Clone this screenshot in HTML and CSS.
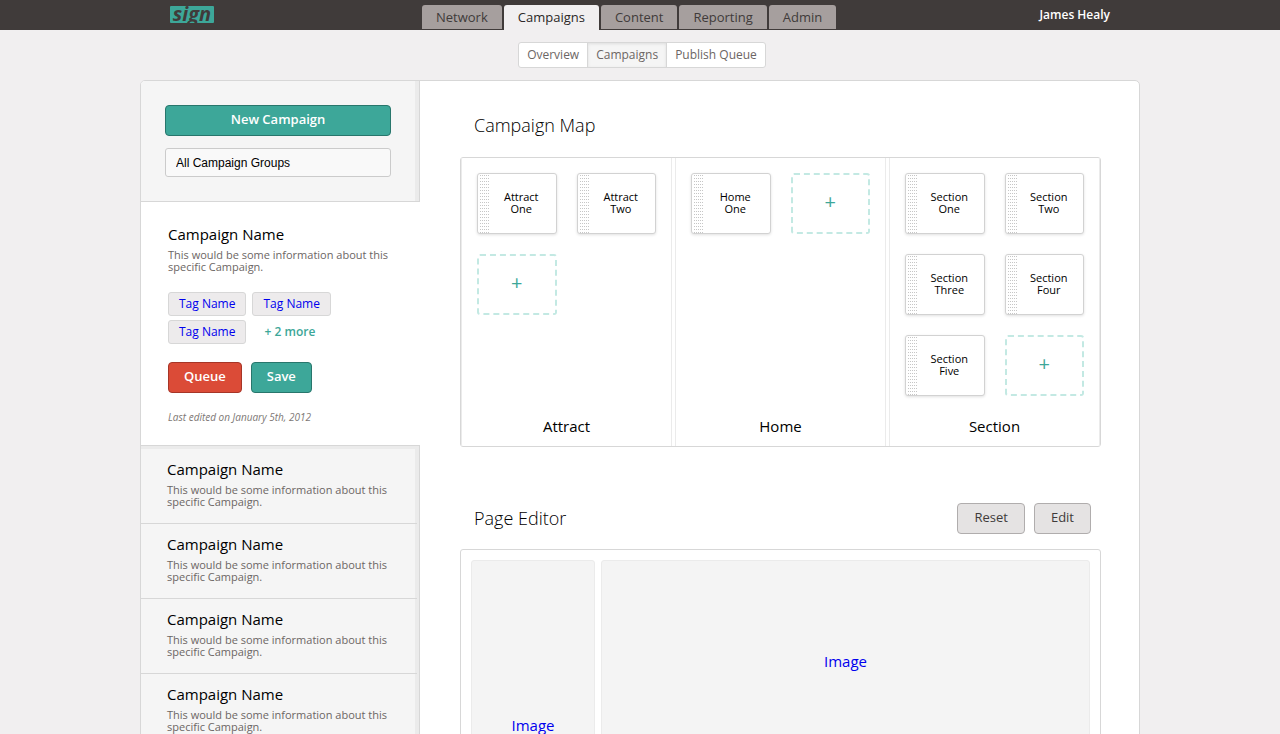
FILE: index.html
```html
<!DOCTYPE html>
<html lang="en">
<head>
<meta charset="utf-8">
<title>Sign – Campaigns</title>
<meta name="viewport" content="width=device-width, initial-scale=1">
<link rel="stylesheet" href="styles.css">
</head>
<body>
<header class="topbar">
  <div class="topbar-inner">
    <div class="brand"><a class="logo" href="#">sign</a></div>
    <nav class="tabs" aria-label="Main">
      <a class="tab" href="#">Network</a>
      <a class="tab tab-active" href="#">Campaigns</a>
      <a class="tab" href="#">Content</a>
      <a class="tab" href="#">Reporting</a>
      <a class="tab" href="#">Admin</a>
    </nav>
    <a class="user" href="#">James Healy</a>
  </div>
</header>
<nav class="subnav" aria-label="Campaigns">
  <div class="subnav-group">
    <a class="subnav-link" href="#">Overview</a>
    <a class="subnav-link subnav-active" href="#">Campaigns</a>
    <a class="subnav-link" href="#">Publish Queue</a>
  </div>
</nav>
<div class="page">
  <aside class="sidebar">
    <div class="side-tools">
      <button class="btn btn-teal" type="button">New Campaign</button>
      <select class="group-select" aria-label="Campaign group"><option>All Campaign Groups</option></select>
    </div>
    <section class="current">
      <h3 class="item-title">Campaign Name</h3>
      <p class="item-text">This would be some information about this specific Campaign.</p>
      <div class="tags">
        <a class="tag" href="#">Tag Name</a>
        <a class="tag" href="#">Tag Name</a>
        <a class="tag" href="#">Tag Name</a>
        <a class="more" href="#">+ 2 more</a>
      </div>
      <div class="actions">
        <button class="btn btn-red" type="button">Queue</button>
        <button class="btn btn-teal" type="button">Save</button>
      </div>
      <p class="edited">Last edited on January 5th, 2012</p>
    </section>
    <ul class="list">
      <li class="item"><h3 class="item-title">Campaign Name</h3><p class="item-text">This would be some information about this specific Campaign.</p></li>
      <li class="item"><h3 class="item-title">Campaign Name</h3><p class="item-text">This would be some information about this specific Campaign.</p></li>
      <li class="item"><h3 class="item-title">Campaign Name</h3><p class="item-text">This would be some information about this specific Campaign.</p></li>
      <li class="item"><h3 class="item-title">Campaign Name</h3><p class="item-text">This would be some information about this specific Campaign.</p></li>
    </ul>
  </aside>
  <main class="main">
    <div class="section-head"><h2 class="section-title">Campaign Map</h2></div>
    <div class="map">
      <section class="lane">
        <div class="cards">
          <div class="card"><span class="grip"></span><span class="card-name">Attract One</span></div>
          <div class="card"><span class="grip"></span><span class="card-name">Attract Two</span></div>
          <button class="add" type="button" aria-label="Add attract page">+</button>
        </div>
        <h4 class="lane-name">Attract</h4>
      </section>
      <section class="lane">
        <div class="cards">
          <div class="card"><span class="grip"></span><span class="card-name">Home One</span></div>
          <button class="add" type="button" aria-label="Add home page">+</button>
        </div>
        <h4 class="lane-name">Home</h4>
      </section>
      <section class="lane">
        <div class="cards">
          <div class="card"><span class="grip"></span><span class="card-name">Section One</span></div>
          <div class="card"><span class="grip"></span><span class="card-name">Section Two</span></div>
          <div class="card"><span class="grip"></span><span class="card-name">Section Three</span></div>
          <div class="card"><span class="grip"></span><span class="card-name">Section Four</span></div>
          <div class="card"><span class="grip"></span><span class="card-name">Section Five</span></div>
          <button class="add" type="button" aria-label="Add section page">+</button>
        </div>
        <h4 class="lane-name">Section</h4>
      </section>
    </div>
    <div class="section-head editor-head">
      <h2 class="section-title">Page Editor</h2>
      <div class="head-actions">
        <button class="btn btn-grey" type="button">Reset</button>
        <button class="btn btn-grey" type="button">Edit</button>
      </div>
    </div>
    <div class="editor">
      <a class="slot slot-tall" href="#">Image</a>
      <a class="slot" href="#">Image</a>
    </div>
  </main>
</div>
</body>
</html>
```
FILE: styles.css
```css
* { box-sizing: border-box; }
html { scrollbar-width: none; }
body {
  margin: 0;
  background: #f1eff0;
  color: #000;
  font-family: "Open Sans", "Noto Sans", sans-serif;
  font-size: 12px;
}
h2, h3, h4, p, ul { margin: 0; padding: 0; font-weight: 400; }
ul { list-style: none; }
a { text-decoration: none; }
button, select { font-family: inherit; margin: 0; }

/* Top bar */
.topbar { background: #403b3a; }
.topbar-inner {
  display: flex;
  align-items: flex-end;
  max-width: 1000px;
  height: 30px;
  margin: 0 auto;
}
.brand { flex: 0 0 282px; padding: 0 0 7px 30px; }
.logo {
  display: block;
  width: 44px;
  height: 17px;
  border-radius: 1px;
  background: #3da799;
  color: #403b3a;
  font-size: 20px;
  font-weight: 700;
  font-style: italic;
  line-height: 15px;
  text-align: center;
}
.tabs { display: flex; align-items: flex-end; gap: 2px; }
.tab {
  margin-bottom: 1px;
  padding: 0 14px;
  border-radius: 3px 3px 0 0;
  background: #a69f9e;
  color: #403b3a;
  font-size: 13px;
  line-height: 24px;
}
.tab-active { margin-bottom: 0; background: #f1eff0; color: #2b2827; line-height: 25px; }
.user {
  margin-left: auto;
  padding-right: 30px;
  color: #fff;
  font-size: 12px;
  font-weight: 600;
  line-height: 30px;
}

/* Second level */
.subnav { display: flex; justify-content: center; padding: 12px 0; }
.subnav-group {
  display: flex;
  margin-left: 4px;
  border: 1px solid #d7d7d7;
  border-radius: 3px;
  background: #fff;
}
.subnav-link { padding: 0 8px; color: #6c6664; font-size: 12px; line-height: 24px; }
.subnav-active {
  border: solid #d7d7d7;
  border-width: 0 1px;
  background: #f5f5f5;
  box-shadow: inset 0 1px 3px #dedede;
}

/* Page */
.page {
  display: flex;
  max-width: 1000px;
  margin: 0 auto 30px;
  border: 1px solid #d7d7d7;
  border-radius: 5px;
  background: #fff;
  overflow: hidden;
}
.sidebar { display: flex; flex: 0 0 279px; flex-direction: column; }
.side-tools {
  display: grid;
  gap: 12px;
  padding: 24px 28px 24px 24px;
  border: solid #d7d7d7;
  border-width: 0 1px 1px 0;
  background: #f5f5f5;
  box-shadow: inset -4px 0 #ebebeb;
}
.group-select {
  height: 29px;
  padding: 0 10px;
  border: 1px solid #cbcbcb;
  border-radius: 3px;
  background: #f9f9f9;
  color: #000;
  font-family: "Liberation Sans", Arial, sans-serif;
  font-size: 12px;
  appearance: none;
}
.btn {
  height: 31px;
  padding: 0 15px 3px;
  border: 1px solid;
  border-radius: 4px;
  font-size: 13px;
  font-weight: 600;
}
.btn-teal { border-color: #28766c; background: #3da799; color: #fff; }
.btn-red { border-color: #a63527; background: #db4b37; color: #fff; }
.btn-grey { padding: 0 16px 3px; border-color: #b0adad; background: #e5e3e3; color: #403b3a; font-weight: 400; }
.current { padding: 22px 24px 20px 27px; }
.item-title { font-size: 15px; line-height: 20px; }
.item-text { margin-top: 5px; color: #6c6664; font-size: 11px; line-height: 12px; }
.tags { display: flex; flex-wrap: wrap; gap: 4px 6px; margin-top: 19px; }
.tag {
  padding: 0 10px;
  border: 1px solid #d7d7d7;
  border-radius: 3px;
  background: #edebec;
  color: #0000ee;
  font-size: 12px;
  line-height: 22px;
}
.more { padding: 0 12px; color: #3da799; font-size: 12px; font-weight: 600; line-height: 24px; }
.actions { display: flex; gap: 9px; margin-top: 18px; }
.edited { margin-top: 16px; color: #7d7775; font-size: 10px; font-style: italic; line-height: 16px; }
.list {
  flex: 1;
  padding-top: 3px;
  border: solid #d7d7d7;
  border-width: 1px 1px 0 0;
  background: #f5f5f5;
  box-shadow: inset -4px 3px #ebebeb;
}
.item { margin-right: 2px; padding: 10px 24px 15px 26px; border-bottom: 1px solid #d7d7d7; }

/* Main column */
.main { flex: 1; min-width: 0; padding: 28px 38px 40px 40px; }
.section-head { display: flex; align-items: center; justify-content: space-between; padding: 0 10px 0 14px; }
.section-title { font-size: 18px; font-weight: 300; line-height: 32px; }
.map {
  display: grid;
  grid-template-columns: repeat(3, 1fr);
  gap: 3px;
  margin-top: 16px;
  border: 1px solid #d7d7d7;
  border-radius: 3px;
}
.lane {
  display: flex;
  flex-direction: column;
  justify-content: space-between;
  padding: 15px 15px 10px;
  border: solid #ebebeb;
  border-width: 0 1px;
}
.cards { display: grid; grid-template-columns: 1fr 1fr; grid-auto-rows: 61px; gap: 20px; }
.card {
  display: flex;
  padding-left: 2px;
  border: 1px solid #d2d2d2;
  border-radius: 3px;
  background: #fff;
  box-shadow: 0 1px 3px #e0e0e0;
}
.grip {
  flex: 0 0 10px;
  margin-top: 1px;
  background: conic-gradient(from 270deg at 1px 1px, #c6c6c6 90deg, transparent 0) 0 0 / 2px 3px;
}
.card-name {
  display: grid;
  flex: 1;
  place-items: center;
  padding: 0 12px 2px 9px;
  font-size: 11px;
  line-height: 12px;
  text-align: center;
}
.add {
  padding: 0 0 4px;
  border: 2px dashed #c3e9e3;
  border-radius: 3px;
  background: none;
  color: #3da799;
  font-size: 20px;
}
.lane-name { margin-top: 20px; font-size: 15px; line-height: 20px; text-align: center; }
.editor-head { margin-top: 55px; }
.head-actions { display: flex; gap: 9px; }
.editor {
  display: grid;
  grid-template-columns: 124px 1fr;
  align-items: start;
  gap: 6px;
  margin-top: 15px;
  padding: 10px;
  border: 1px solid #d7d7d7;
  border-radius: 3px;
}
.slot {
  display: grid;
  place-items: center;
  min-height: 204px;
  padding-bottom: 2px;
  border: 1px solid #ebebeb;
  border-radius: 3px;
  background: #f4f4f4;
  color: #0000ee;
  font-size: 15px;
}
.slot-tall { min-height: 332px; }
```
